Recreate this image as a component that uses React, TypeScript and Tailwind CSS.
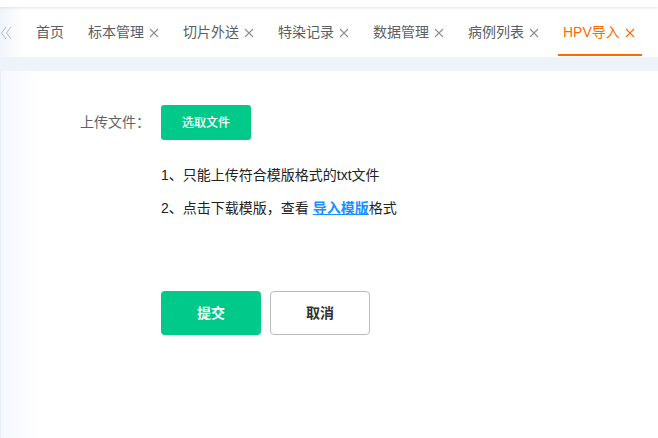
const tabs = [
  { label: "首页", closable: false },
  { label: "标本管理", closable: true },
  { label: "切片外送", closable: true },
  { label: "特染记录", closable: true },
  { label: "数据管理", closable: true },
  { label: "病例列表", closable: true },
  { label: "HPV导入", closable: true, active: true },
];

function CloseIcon({ className }: { className?: string }) {
  return (
    <svg width="10" height="10" viewBox="0 0 10 10" className={className}>
      <path d="M1 1 L9 9 M9 1 L1 9" stroke="currentColor" strokeWidth="1.1" fill="none" />
    </svg>
  );
}

export default function App() {
  return (
    <div
      className="w-[658px] h-[438px] overflow-hidden bg-white flex flex-col"
      style={{ fontFamily: '"Liberation Sans", "Noto Sans CJK SC", sans-serif' }}
    >
      <div className="h-[7px] shrink-0 bg-white shadow-[0_1px_3px_rgba(0,0,0,0.10)] relative z-10" />

      {/* tabs */}
      <div className="h-[50px] shrink-0 flex items-stretch bg-white overflow-hidden">
        <div className="w-[24px] shrink-0 flex items-center bg-gradient-to-r from-[#f1f4fa] to-white">
          <svg width="12" height="14" viewBox="0 0 12 14" className="mt-[1px]">
            <path d="M6 1 L1.5 7 L6 13 M11 1 L6.5 7 L11 13" fill="none" stroke="#b4b8c0" strokeWidth="1" />
          </svg>
        </div>
        {tabs.map((tab) => (
          <div
            key={tab.label}
            className={`relative shrink-0 whitespace-nowrap flex items-center px-[12px] text-[14px] ${
              tab.active ? "text-[#ff6a00]" : "text-[#5a5e66]"
            }`}
          >
            <span>{tab.label}</span>
            {tab.closable && (
              <CloseIcon className={`ml-[5px] mt-[1px] ${tab.active ? "text-[#ff6a00]" : "text-[#8c8f96]"}`} />
            )}
            {tab.active && <div className="absolute left-[7px] right-[5px] bottom-[1px] h-[2px] bg-[#ff6a00]" />}
          </div>
        ))}
      </div>

      <div className="h-[14px] shrink-0 bg-[#eef2f9]" />

      {/* content */}
      <div className="flex-1 border-l border-[#e8eef9] bg-[linear-gradient(to_right,#f5f8fe,#ffffff_42px)] pl-[79px] pt-[34px]">
        <div className="flex items-center">
          <div className="w-[81px] text-[14px] text-[#606266]">上传文件：</div>
          <button className="w-[90px] h-[35px] rounded-[3px] bg-[#00c98a] text-white text-[12px] font-medium">
            选取文件
          </button>
        </div>

        <div className="ml-[81px] mt-[25px] text-[14px] leading-[20px] text-[#222]">
          <p>1、只能上传符合模版格式的txt文件</p>
          <p className="mt-[13px]">
            2、点击下载模版，查看{" "}
            <a className="text-[#1890ff] underline font-bold">导入模版</a>
            格式
          </p>
        </div>

        <div className="ml-[81px] mt-[73px] flex gap-[9px]">
          <button className="w-[100px] h-[44px] rounded-[4px] bg-[#00c98a] text-white text-[14px] font-bold">
            提交
          </button>
          <button className="w-[100px] h-[44px] rounded-[4px] bg-white border border-[#b9bcc4] text-[#303133] text-[14px] font-bold">
            取消
          </button>
        </div>
      </div>
    </div>
  );
}
